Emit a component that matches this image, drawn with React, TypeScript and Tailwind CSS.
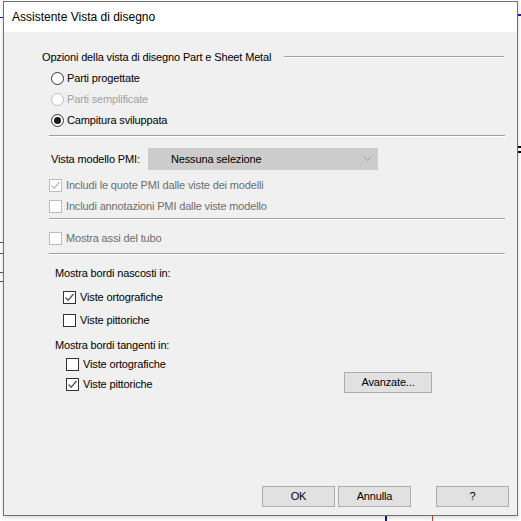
import React from 'react';

function Radio({ label, checked, disabled }: { label: string; checked?: boolean; disabled?: boolean }) {
  return (
    <div className="flex h-[21px] items-center">
      <span
        className={`flex h-[13px] w-[13px] items-center justify-center rounded-full border bg-white ${disabled ? 'border-[#bcbcbc]' : 'border-[#333333]'}`}
      >
        {checked && <span className="h-[7px] w-[7px] rounded-full bg-[#1a1a1a]" />}
      </span>
      <span className={`ml-[3px] ${disabled ? 'text-[#a0a0a0]' : 'text-black'}`}>{label}</span>
    </div>
  );
}

function Check({ label, checked, disabled, h = 'h-[21px]' }: { label: string; checked?: boolean; disabled?: boolean; h?: string }) {
  return (
    <div className={`flex ${h} items-center`}>
      <span className={`flex h-[13px] w-[13px] items-center justify-center border bg-white ${disabled ? 'border-[#bcbcbc]' : 'border-[#333333]'}`}>
        {checked && (
          <svg width="11" height="11" viewBox="0 0 11 11">
            <path d="M1.5 5.5 L4.2 8.2 L9.5 2" fill="none" stroke={disabled ? '#bcbcbc' : '#555555'} strokeWidth="1.3" />
          </svg>
        )}
      </span>
      <span className={`ml-[4px] whitespace-nowrap ${disabled ? 'text-[#6d6d6d]' : 'text-black'}`}>{label}</span>
    </div>
  );
}

function Sep({ className = '' }: { className?: string }) {
  return <div className={`ml-[7px] mr-[12px] h-[2px] border-t border-[#a0a0a0] border-b border-b-white ${className}`} />;
}

function Btn({ label, w = 'w-[73px]' }: { label: string; w?: string }) {
  return (
    <button className={`${w} h-[21px] border border-[#adadad] bg-[#e1e1e1] text-black`}>{label}</button>
  );
}

export default function App() {
  return (
    <div
      className="relative h-[521px] w-[521px] overflow-hidden bg-white text-[11px] leading-none tracking-[-0.15px]"
      style={{ fontFamily: '"Liberation Sans", Arial, sans-serif' }}
    >
      {/* drawing behind the dialog */}
      <div className="absolute left-0 top-[17px] h-[1px] w-[4px] bg-[#1e1e9e]" />
      <div className="absolute left-[518px] top-[14px] h-[2px] w-[3px] bg-[#1e1e9e]" />
      <div className="absolute left-[518px] top-[146px] h-[2px] w-[3px] bg-black" />
      <div className="absolute left-[518px] top-[151px] h-[2px] w-[3px] bg-black" />
      <div className="absolute left-0 top-[242px] h-[1px] w-[4px] bg-[#555555]" />
      <div className="absolute left-0 top-[253px] h-[1px] w-[4px] bg-[#555555]" />
      <div className="absolute left-0 top-[272px] h-[1px] w-[4px] bg-[#555555]" />
      <div className="absolute left-0 top-[281px] h-[1px] w-[4px] bg-[#555555]" />
      <div className="absolute left-[385px] top-[512px] h-[10px] w-[2px] bg-[#1414a0]" />
      <div className="absolute left-[432px] top-[512px] h-[10px] w-[1px] bg-[#d04040]" />

      <div className="absolute left-[3px] top-[1px] flex h-[515px] w-[515px] flex-col border border-[#707070] bg-[#f0f0f0] shadow-[0_2px_4px_rgba(0,0,0,0.15)]">
        <div className="flex h-[30px] items-center bg-white pl-[8px] text-[12px] tracking-normal text-black">Assistente Vista di disegno</div>

        <div className="flex flex-1 flex-col pl-[38px]">
          <div className="mt-[17px] flex h-[16px] items-center">
            <span className="whitespace-nowrap">Opzioni della vista di disegno Part e Sheet Metal</span>
            <div className="ml-[13px] mr-[13px] h-[2px] flex-1 border-t border-[#a0a0a0] border-b border-b-white" />
          </div>

          <div className="ml-[9px] mt-[3px]">
            <Radio label="Parti progettate" />
            <Radio label="Parti semplificate" disabled />
            <Radio label="Campitura sviluppata" checked />
          </div>

          <Sep className="mt-[4px]" />

          <div className="ml-[9px] mt-[11px] flex h-[22px] items-center">
            <span className="w-[97px] whitespace-nowrap">Vista modello PMI:</span>
            <div className="relative flex h-[22px] w-[230px] items-center bg-[#cccccc] pl-[23px]">
              <span>Nessuna selezione</span>
              <svg className="absolute right-[6px] top-[8px]" width="9" height="6" viewBox="0 0 9 6">
                <path d="M0.5 0.5 L4.5 4.5 L8.5 0.5" fill="none" stroke="#a0a0a0" strokeWidth="1" />
              </svg>
            </div>
          </div>

          <div className="ml-[7px] mt-[5px]">
            <Check label="Includi le quote PMI dalle viste dei modelli" checked disabled />
            <Check label="Includi annotazioni PMI dalle viste modello" disabled />
          </div>

          <Sep className="mt-[1px]" />

          <div className="ml-[7px] mt-[8px]">
            <Check label="Mostra assi del tubo" disabled />
          </div>

          <Sep className="mt-[4px] mr-[11px]" />

          <div className="ml-[13px] mt-[10px] flex h-[16px] items-center">Mostra bordi nascosti in:</div>
          <div className="ml-[21px] mt-[5px]">
            <Check label="Viste ortografiche" checked h="h-[23px]" />
            <Check label="Viste pittoriche" h="h-[23px]" />
          </div>

          <div className="ml-[13px] mt-[5px] flex h-[16px] items-center">Mostra bordi tangenti in:</div>
          <div className="mt-[1px] flex items-end">
            <div className="ml-[24px]">
              <Check label="Viste ortografiche" h="h-[20px]" />
              <Check label="Viste pittoriche" checked h="h-[20px]" />
            </div>
            <div className="ml-auto mr-[85px] mb-[1px]">
              <Btn label="Avanzate..." w="w-[88px]" />
            </div>
          </div>

          <div className="flex-1" />
          <div className="mb-[8px] mr-[8px] flex justify-end">
            <Btn label="OK" />
            <div className="ml-[3px]">
              <Btn label="Annulla" />
            </div>
            <div className="ml-[25px]">
              <Btn label="?" />
            </div>
          </div>
        </div>
      </div>
    </div>
  );
}
